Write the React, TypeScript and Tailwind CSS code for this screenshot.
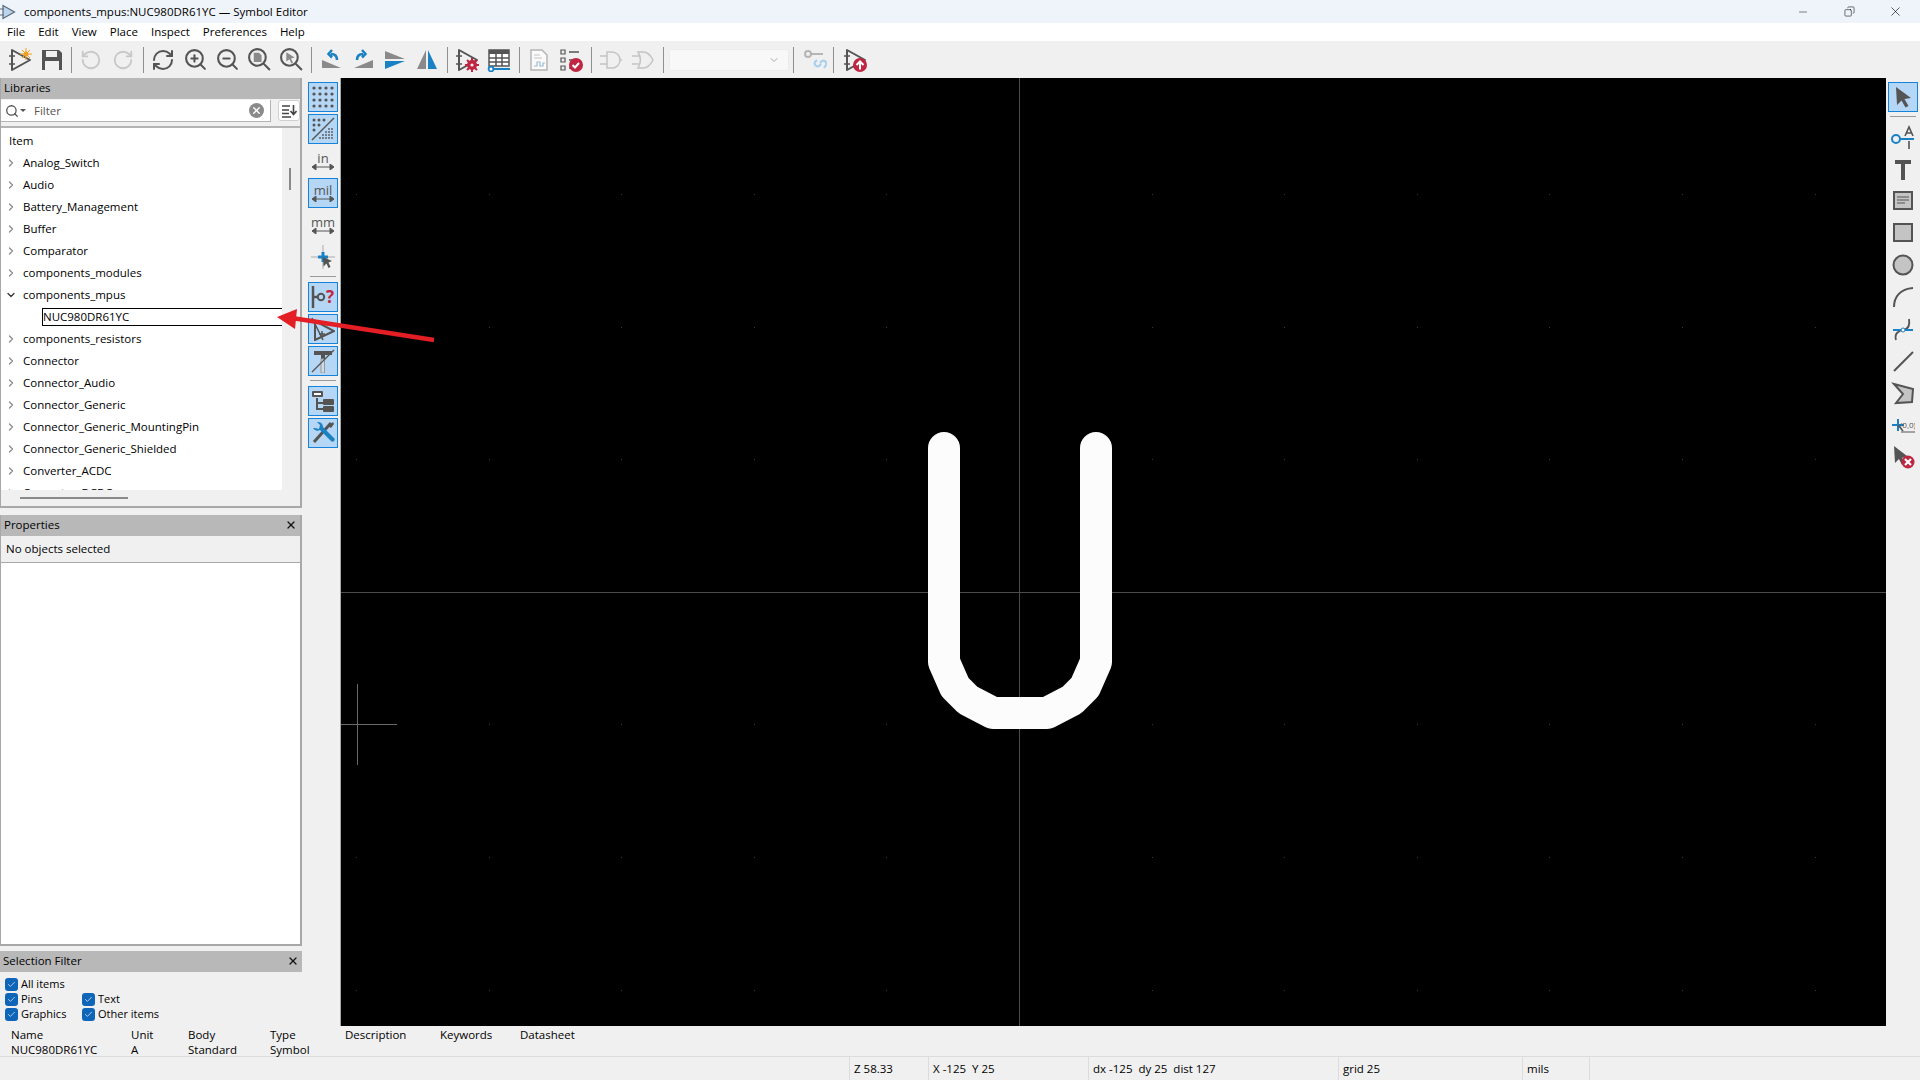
import React from 'react';
import { RefreshCw, RotateCcw, RotateCw, ZoomIn, ZoomOut, Search, ChevronRight, ChevronDown, X, Check, Minus, Copy } from 'lucide-react';

const GRAY = '#545454';
const BLUE = '#1a81c4';
const RED = '#bf2641';

const libs = ['Analog_Switch', 'Audio', 'Battery_Management', 'Buffer', 'Comparator', 'components_modules'];
const libs2 = ['components_resistors', 'Connector', 'Connector_Audio', 'Connector_Generic', 'Connector_Generic_MountingPin', 'Connector_Generic_Shielded', 'Converter_ACDC', 'Converter_DCDC'];

function Svg({ children, size = 24 }: { children: React.ReactNode; size?: number }) {
  return (
    <svg width={size} height={size} viewBox="0 0 24 24" fill="none">
      {children}
    </svg>
  );
}

function Opamp({ color = GRAY }: { color?: string }) {
  return (
    <>
      <path d="M4 2 L22 12 L4 22 Z" stroke={color} strokeWidth="2" fill="none" strokeLinejoin="round" />
      <path d="M1 8h6M1 16h6M2.5 16M4 14v4" stroke={color} strokeWidth="1.5" />
    </>
  );
}

function ToolBtn({ children }: { children?: React.ReactNode }) {
  return <div className="w-8 h-[30px] flex items-center justify-center shrink-0">{children}</div>;
}

function ToolSep({ className = 'ml-1 mr-[3px]' }: { className?: string }) {
  return <div className={`w-px h-[26px] shrink-0 bg-[#8f8f8f] ${className}`} />;
}

function SideBtn({ on, children }: { on?: boolean; children?: React.ReactNode }) {
  return (
    <div className={`w-[30px] h-[30px] shrink-0 flex items-center justify-center ${on ? 'bg-[#b5d7f5] border-[1.5px] border-[#1583dc]' : ''}`}>
      {children}
    </div>
  );
}

function SideSep() {
  return <div className="w-[26px] h-px bg-[#9a9a9a] mt-[2px] mb-[3px] shrink-0" />;
}

function PanelHead({ title, close }: { title: string; close?: boolean }) {
  return (
    <div className="h-[21px] shrink-0 bg-[#b8b8b8] flex items-center justify-between pl-[3px] pr-[3px] pb-[2px]">
      <span>{title}</span>
      {close && <X size={12} strokeWidth={2.5} color="#111" />}
    </div>
  );
}

function Check2({ label, w }: { label: string; w?: string }) {
  return (
    <div className={`flex items-center gap-[3px] h-[15px] text-[11px] ${w ?? ''}`}>
      <span className="w-[13px] h-[13px] rounded-[3px] bg-[#0f65b7] flex items-center justify-center shrink-0">
        <Check size={9} color="#dfeeff" strokeWidth={2} />
      </span>
      <span>{label}</span>
    </div>
  );
}

function TreeRow({ label, open }: { label: string; open?: boolean }) {
  return (
    <div className="h-[22px] shrink-0 flex items-center pl-[4px]">
      {open ? <ChevronDown size={12} color="#333" strokeWidth={2.5} /> : <ChevronRight size={12} color="#8a8a8a" strokeWidth={2.5} />}
      <span className="ml-[6px] whitespace-nowrap">{label}</span>
    </div>
  );
}

function MsgCol({ a, b, w }: { a: string; b?: string; w: string }) {
  return (
    <div className={`${w} shrink-0 flex flex-col leading-[15px]`}>
      <span>{a}</span>
      <span>{b ?? '\u00a0'}</span>
    </div>
  );
}

function Unit({ label }: { label: string }) {
  return (
    <div className="flex flex-col items-center leading-[11px] text-[13px] text-[#555]">
      <span>{label}</span>
      <svg width="22" height="6" viewBox="0 0 22 6"><path d="M0 3l4-3v6ZM22 3l-4-3v6ZM3 3h16" fill={GRAY} stroke={GRAY} /></svg>
    </div>
  );
}

const dots: [number, number][] = [];
for (let i = 0; i < 12; i++) {
  for (let j = 0; j < 7; j++) dots.push([356 + i * 132.6, 194 + j * 132.6]);
}

export default function App() {
  return (
    <div className="relative w-[1920px] h-[1080px] overflow-hidden flex flex-col bg-[#f0f0f0] text-black text-[11.5px] font-['Open_Sans',sans-serif]">
      {/* title bar */}
      <div className="h-[23px] shrink-0 bg-[#eff4fb] flex items-center">
        <div className="w-6 flex justify-center pr-2 shrink-0">
          <svg width="16" height="16" viewBox="0 0 16 16" fill="none">
            <path d="M3 1.5 L14.5 8 L3 14.5 Z" fill="#b9d6ee" stroke="#5d6a76" strokeWidth="1.2" />
            <path d="M0 5h4M0 11h4" stroke="#5d6a76" />
          </svg>
        </div>
        <span>components_mpus:NUC980DR61YC — Symbol Editor</span>
        <div className="ml-auto flex items-center pr-[2px]">
          <div className="w-[46px] flex justify-center"><Minus size={12} strokeWidth={1} /></div>
          <div className="w-[46px] flex justify-center"><Copy size={11} strokeWidth={1.2} className="-scale-x-100" /></div>
          <div className="w-[46px] flex justify-center"><X size={15} strokeWidth={1} /></div>
        </div>
      </div>

      {/* menu */}
      <div className="h-[18px] shrink-0 bg-white flex items-center pl-[7px] gap-[13px]">
        {['File', 'Edit', 'View', 'Place', 'Inspect', 'Preferences', 'Help'].map((m) => (
          <span key={m}>{m}</span>
        ))}
      </div>

      {/* main toolbar */}
      <div className="h-[37px] shrink-0 flex items-center pl-1">
        <ToolBtn>
          <Svg>
            <Opamp />
            <circle cx="18" cy="6" r="2.5" fill="#f0a020" />
            <path d="M18 0v12M12 6h12M14 2l8 8M22 2l-8 8" stroke="#f0a020" strokeWidth="1" />
          </Svg>
        </ToolBtn>
        <ToolBtn>
          <Svg>
            <path d="M2 2h17l3 3v17H2Z" fill={GRAY} />
            <rect x="6" y="3" width="11" height="6" fill="#f0f0f0" />
            <rect x="5" y="13" width="14" height="9" fill="#f0f0f0" />
          </Svg>
        </ToolBtn>
        <ToolSep className="ml-[3px] mr-[3px]" />
        <ToolBtn><RotateCcw size={22} color="#c8c8c8" strokeWidth={2} /></ToolBtn>
        <ToolBtn><RotateCw size={22} color="#c8c8c8" strokeWidth={2} /></ToolBtn>
        <ToolSep />
        <ToolBtn><RefreshCw size={24} color={GRAY} strokeWidth={2} /></ToolBtn>
        <ToolBtn><ZoomIn size={25} color={GRAY} strokeWidth={2} /></ToolBtn>
        <ToolBtn><ZoomOut size={25} color={GRAY} strokeWidth={2} /></ToolBtn>
        <ToolBtn>
          <Svg size={25}>
            <circle cx="10" cy="10" r="8" stroke={GRAY} strokeWidth="2" />
            <path d="M16 16l6 6" stroke={GRAY} strokeWidth="2" />
            <path d="M6.5 5.5h5l2.5 2.5v6.5h-7.5Z" fill="#8a8a8a" />
          </Svg>
        </ToolBtn>
        <ToolBtn>
          <Svg size={25}>
            <circle cx="10" cy="10" r="8" stroke={GRAY} strokeWidth="2" />
            <path d="M16 16l6 6" stroke={GRAY} strokeWidth="2" />
            <path d="M7 5l8 5-3.5 1 2 4-1.5.8-2-4-3 2.2Z" fill="#8a8a8a" />
          </Svg>
        </ToolBtn>
        <ToolSep />
        <ToolBtn>
          <Svg>
            <path d="M3 20 L22 20 L3 12 Z" fill="#8a8a8a" />
            <path d="M14 13c0-4-2-6-6-6M9 3L5.5 7 9 10.5" stroke={BLUE} strokeWidth="2.5" transform="translate(4 -1)" />
          </Svg>
        </ToolBtn>
        <ToolBtn>
          <Svg>
            <path d="M22 20 L3 20 L22 12 Z" fill="#8a8a8a" />
            <path d="M10 13c0-4 2-6 6-6M15 3l3.5 4-3.5 3.5" stroke={BLUE} strokeWidth="2.5" transform="translate(-4 -1)" />
          </Svg>
        </ToolBtn>
        <ToolBtn>
          <Svg>
            <path d="M2 3 L22 11 H2 Z" fill="#8a8a8a" />
            <path d="M2 13 H22 L2 21 Z" fill={BLUE} />
          </Svg>
        </ToolBtn>
        <ToolBtn>
          <Svg>
            <path d="M11 2 V21 H2 Z" fill="#8a8a8a" />
            <path d="M13 2 V21 H22 Z" fill={BLUE} />
          </Svg>
        </ToolBtn>
        <ToolSep />
        <ToolBtn>
          <Svg>
            <Opamp />
            <circle cx="17" cy="17" r="5" fill={RED} />
            <path d="M17 10v14M10 17h14M12 12l10 10M22 12l-10 10" stroke={RED} strokeWidth="2" />
            <circle cx="17" cy="17" r="1.6" fill="#f0f0f0" />
          </Svg>
        </ToolBtn>
        <ToolBtn>
          <Svg>
            <path d="M2 2h20v16H2Z" fill="#fff" stroke={GRAY} strokeWidth="1.5" />
            <path d="M2 2h20v4H2Z" fill={GRAY} />
            <path d="M2 10h20M2 14h20M9 6v12M15 6v12" stroke={GRAY} strokeWidth="1.5" />
            <path d="M6 21h17" stroke={BLUE} strokeWidth="2" />
            <circle cx="4" cy="21" r="2.4" fill="#fff" stroke={BLUE} strokeWidth="1.8" />
          </Svg>
        </ToolBtn>
        <ToolSep />
        <ToolBtn>
          <Svg>
            <path d="M4 2h11l5 5v15H4Z" fill="#fafafa" stroke="#b5b5b5" strokeWidth="1.5" />
            <path d="M7 7h6M7 10h8" stroke="#c4c4c4" />
            <path d="M7 18h3v-4h3v4h3v-3h2" stroke="#9dbcd4" strokeWidth="1.2" />
          </Svg>
        </ToolBtn>
        <ToolBtn>
          <Svg>
            <path d="M2 2h4v4H2ZM2 10h4v4H2ZM2 18h4v4H2Z" stroke={GRAY} strokeWidth="1.2" />
            <path d="M10 4h10M10 12h4M10 20h2" stroke={GRAY} strokeWidth="1.5" />
            <circle cx="17" cy="17" r="7" fill={RED} />
            <path d="M13.5 17l2.5 2.5 4-4.5" stroke="#fff" strokeWidth="2" />
          </Svg>
        </ToolBtn>
        <ToolSep />
        <ToolBtn>
          <Svg>
            <path d="M8 4h5a8 8 0 0 1 0 16H8Z" stroke="#c4c4c4" strokeWidth="1.5" />
            <path d="M1 8h7M1 16h7M21 12h2" stroke="#c4c4c4" strokeWidth="1.5" />
          </Svg>
        </ToolBtn>
        <ToolBtn>
          <Svg>
            <path d="M7 4h5c5 0 8 4 10 8-2 4-5 8-10 8H7c3-5 3-11 0-16Z" stroke="#c4c4c4" strokeWidth="1.5" />
            <path d="M1 8h7M1 16h7" stroke="#c4c4c4" strokeWidth="1.5" />
          </Svg>
        </ToolBtn>
        <ToolSep className="ml-1 mr-[5px]" />
        <div className="w-[120px] h-[22px] shrink-0 bg-[#f8f8f8] border border-[#ececec] rounded-[2px] flex items-center justify-end pr-2">
          <ChevronDown size={12} color="#a8a8a8" />
        </div>
        <ToolSep className="ml-1 mr-[5px]" />
        <ToolBtn>
          <Svg>
            <circle cx="5" cy="6" r="3" stroke="#b5b5b5" strokeWidth="2" />
            <path d="M8 6h12" stroke="#b5b5b5" strokeWidth="2" />
            <path d="M14 12l-2 2a3 3 0 0 0 4 4l2-2M17 15l2-2a3 3 0 0 1 4 4l-2 3" stroke="#a9d0ee" strokeWidth="2.2" />
          </Svg>
        </ToolBtn>
        <ToolSep className="ml-[2px] mr-[5px]" />
        <ToolBtn>
          <Svg>
            <Opamp />
            <circle cx="17" cy="17" r="7" fill={RED} />
            <path d="M17 21.5v-8M13.5 17l3.5-3.5 3.5 3.5" stroke="#fff" strokeWidth="2" />
          </Svg>
        </ToolBtn>
      </div>

      {/* main area */}
      <div className="h-[948px] shrink-0 flex">
        {/* left docks */}
        <div className="w-[302px] shrink-0 flex flex-col">
          <div className="h-[430px] shrink-0 flex flex-col border-r-2 border-b-2 border-l border-[#a8a8a8]">
            <PanelHead title="Libraries" />
            <div className="h-[27px] shrink-0 flex items-start pt-px">
              <div className="w-[270px] h-[22px] bg-white border-b border-r border-[#b4b4b4] flex items-center pl-1">
                <Search size={14} color="#555" strokeWidth={2.2} />
                <span className="w-0 h-0 border-x-[3px] border-t-[3px] border-x-transparent border-t-[#555] mx-[1px]" />
                <span className="ml-[7px] text-[#555]">Filter</span>
                <span className="ml-auto mr-[6px] w-[15px] h-[15px] rounded-full bg-[#8a8a8a] flex items-center justify-center">
                  <X size={11} color="#fff" strokeWidth={3} />
                </span>
              </div>
              <div className="ml-[7px] w-[22px] h-[21px] bg-white border border-[#d0d0d0] rounded-[3px] flex items-center justify-center">
                <svg width="16" height="14" viewBox="0 0 16 14" fill="none">
                  <path d="M1 2h8M1 6h7M1 9.5h7M1 13h9" stroke="#444" strokeWidth="1.6" />
                  <path d="M12.5 1v9M9.5 7l3 3.5 3-3.5" stroke="#444" strokeWidth="1.6" />
                </svg>
              </div>
            </div>
            <div className="flex-1 min-h-0 flex flex-col border-t-2 border-[#b4b4b4] overflow-hidden">
              <div className="flex-1 min-h-0 flex">
                <div className="w-[281px] shrink-0 bg-white flex flex-col overflow-hidden pt-[2px]">
                  <div className="h-[22px] shrink-0 flex items-center pl-[8px]">Item</div>
                  {libs.map((l) => <TreeRow key={l} label={l} />)}
                  <TreeRow label="components_mpus" open />
                  <div className="h-[22px] shrink-0 pl-[41px] flex items-center">
                    <div className="flex-1 h-[18px] border border-r-0 border-black flex items-center">NUC980DR61YC</div>
                  </div>
                  {libs2.map((l) => <TreeRow key={l} label={l} />)}
                </div>
                <div className="flex-1 relative">
                  <div className="absolute left-[7px] top-[40px] w-[2px] h-[22px] bg-[#8a8a8a]" />
                </div>
              </div>
              <div className="h-[16px] shrink-0 flex items-center pl-[19px]">
                <div className="w-[108px] h-[2px] bg-[#8a8a8a]" />
              </div>
            </div>
          </div>

          <div className="h-[431px] shrink-0 mt-[7px] flex flex-col border-r-2 border-b-2 border-l border-[#a8a8a8]">
            <PanelHead title="Properties" close />
            <div className="h-[27px] shrink-0 flex items-center pl-[5px] border-b border-[#a8a8a8]">No objects selected</div>
            <div className="flex-1 bg-white" />
          </div>

          <div className="flex-1 mt-[5px] flex flex-col">
            <PanelHead title="Selection Filter" close />
            <div className="pl-[5px] pt-[5px] flex flex-col">
              <Check2 label="All items" />
              <div className="flex"><Check2 label="Pins" w="w-[77px]" /><Check2 label="Text" /></div>
              <div className="flex"><Check2 label="Graphics" w="w-[77px]" /><Check2 label="Other items" /></div>
            </div>
          </div>
        </div>

        {/* left vertical toolbar */}
        <div className="w-[39px] shrink-0 flex flex-col items-center gap-[2px] pt-1 pl-1 border-r border-[#a8a8a8]">
          <SideBtn on>
            <Svg>
              {[3, 9, 15, 21].map((y) => [3, 9, 15, 21].map((x) => <circle key={`${x}-${y}`} cx={x} cy={y} r="1.6" fill={GRAY} />))}
            </Svg>
          </SideBtn>
          <SideBtn on>
            <Svg>
              {[3, 8, 13].map((y) => [3, 8, 13].map((x) => (x + y < 20 ? <circle key={`${x}-${y}`} cx={x} cy={y} r="1.5" fill={GRAY} /> : null)))}
              <path d="M1 23L23 1" stroke={GRAY} strokeWidth="1.5" />
              {[12, 15, 18, 21].map((y) => [9, 12, 15, 18, 21].map((x) => (x + y > 27 ? <circle key={`${x}+${y}`} cx={x} cy={y} r="0.9" fill={GRAY} /> : null)))}
            </Svg>
          </SideBtn>
          <SideBtn><Unit label="in" /></SideBtn>
          <SideBtn on><Unit label="mil" /></SideBtn>
          <SideBtn><Unit label="mm" /></SideBtn>
          <SideBtn>
            <Svg>
              <path d="M12 0v24M0 12h24" stroke="#aaa" strokeWidth="1" />
              <path d="M12 7v10M7 12h10" stroke={BLUE} strokeWidth="3" />
              <path d="M12 12l9 4-3.5 1.5 2 4.5-2 1-2-4.5-3 3Z" fill={GRAY} />
            </Svg>
          </SideBtn>
          <SideSep />
          <SideBtn on>
            <Svg>
              <path d="M2 1v22" stroke={GRAY} strokeWidth="2.5" />
              <path d="M2 12h5" stroke={GRAY} strokeWidth="2.5" />
              <circle cx="10" cy="12" r="3.2" stroke={GRAY} strokeWidth="2" />
              <text x="15" y="18" fontSize="17" fontWeight="700" fill={RED} fontFamily="Open Sans">?</text>
            </Svg>
          </SideBtn>
          <SideBtn on>
            <Svg>
              <path d="M4 4 L23 14 L4 23 Z" stroke={GRAY} strokeWidth="2" />
              <path d="M1 1 L12 23" stroke={GRAY} strokeWidth="1.5" />
              <path d="M8 17h6M11 14v6" stroke={GRAY} strokeWidth="1.5" />
            </Svg>
          </SideBtn>
          <SideBtn on>
            <Svg>
              <path d="M3 2h18v4h-7v18h-4V6H3Z" fill={GRAY} />
              <path d="M10 10h3.5v14H10Z" fill="#cfdbe6" stroke="#999" />
              <path d="M1 23L23 1" stroke={GRAY} strokeWidth="1.2" />
            </Svg>
          </SideBtn>
          <SideSep />
          <SideBtn on>
            <Svg>
              <path d="M6 9v11h6M6 14h6" stroke={GRAY} strokeWidth="2" />
              <rect x="1" y="2" width="11" height="6" rx="1" fill={GRAY} />
              <rect x="3" y="4" width="7" height="2" fill="#fff" />
              <rect x="12" y="10" width="11" height="6" rx="1" fill={GRAY} />
              <rect x="12" y="17" width="11" height="6" rx="1" fill={GRAY} />
            </Svg>
          </SideBtn>
          <SideBtn on>
            <Svg>
              <path d="M20 2L3 21" stroke={GRAY} strokeWidth="3" />
              <path d="M22 1l1 2-3 4-3-2Z" fill={GRAY} />
              <path d="M2 7a5 5 0 0 0 7 2l11 11a2 2 0 0 0 3-3L12 6A5 5 0 0 0 6 1l3 3-1 4-4-1Z" fill={BLUE} />
            </Svg>
          </SideBtn>
        </div>

        {/* canvas */}
        <div className="flex-1 bg-black min-w-0">
          <svg className="block" width="1545" height="948" viewBox="341 78 1545 948">
            {dots.map(([x, y]) => (
              <rect key={`${x}-${y}`} x={Math.round(x)} y={Math.round(y)} width="1" height="1" fill="#383838" />
            ))}
            <path d="M1019.5 78V1026M341 592.5H1886" stroke="#4c4c4c" strokeWidth="1" />
            <path d="M357.5 684V765M341 724.5H397" stroke="#6a6a6a" strokeWidth="1" />
            <path
              d="M944 448V662L955 687L968 700L993 713H1047L1072 700L1085 687L1096 662V448"
              stroke="#fcfcfc"
              strokeWidth="32"
              strokeLinecap="round"
              strokeLinejoin="round"
              fill="none"
            />
          </svg>
        </div>

        {/* right vertical toolbar */}
        <div className="w-[34px] shrink-0 flex flex-col items-center gap-[2px] pt-1">
          <SideBtn on>
            <Svg>
              <path d="M5 2l15 11-6.5 1 4 7-3 1.5-4-7L6 20Z" fill={GRAY} />
            </Svg>
          </SideBtn>
          <SideSep />
          <SideBtn>
            <Svg>
              <circle cx="5" cy="14" r="4" stroke={BLUE} strokeWidth="2" />
              <path d="M9 14h14" stroke={BLUE} strokeWidth="2" />
              <path d="M14 11l4-9 4 9M15.5 8h5M18 16v8" stroke={GRAY} strokeWidth="1.6" />
            </Svg>
          </SideBtn>
          <SideBtn>
            <Svg>
              <path d="M4 3h16v4h-6v16h-4V7H4Z" fill={GRAY} />
            </Svg>
          </SideBtn>
          <SideBtn>
            <Svg>
              <rect x="3" y="3" width="18" height="17" fill="#c4c4c4" stroke={GRAY} strokeWidth="2" />
              <path d="M6 8h12M6 11h12M6 14h8" stroke={GRAY} strokeWidth="1" />
            </Svg>
          </SideBtn>
          <SideBtn>
            <Svg>
              <rect x="3" y="3" width="18" height="17" fill="#c4c4c4" stroke={GRAY} strokeWidth="2" />
            </Svg>
          </SideBtn>
          <SideBtn>
            <Svg>
              <circle cx="12" cy="12" r="9.5" fill="#c4c4c4" stroke={GRAY} strokeWidth="2" />
            </Svg>
          </SideBtn>
          <SideBtn>
            <Svg>
              <path d="M3 22C3 12 9 4 22 3" stroke={GRAY} strokeWidth="2" />
            </Svg>
          </SideBtn>
          <SideBtn>
            <Svg>
              <path d="M5 23C3 16 8 14 12 13 18 12 19 8 18 2" stroke={GRAY} strokeWidth="1.8" />
              <path d="M2 13h20" stroke={BLUE} strokeWidth="2" />
              <circle cx="12" cy="13" r="2" fill="#fff" stroke={BLUE} />
            </Svg>
          </SideBtn>
          <SideBtn>
            <Svg>
              <path d="M3 22L22 3" stroke={GRAY} strokeWidth="2" />
            </Svg>
          </SideBtn>
          <SideBtn>
            <Svg>
              <path d="M3 3L22 8 21 21 5 22 12 13Z" fill="#c4c4c4" stroke={GRAY} strokeWidth="2" />
            </Svg>
          </SideBtn>
          <SideBtn>
            <Svg>
              <path d="M7 6v12M1 12h12" stroke={BLUE} strokeWidth="2" />
              <path d="M7 12l5 6" stroke={GRAY} strokeWidth="1.5" />
              <path d="M10 19h14" stroke={GRAY} strokeWidth="1" />
              <text x="9" y="15" fontSize="8" fill={GRAY} fontFamily="Open Sans">(0,0)</text>
            </Svg>
          </SideBtn>
          <SideBtn>
            <Svg>
              <path d="M3 1l13 10-5 2 3 5-3 2-3-6-4 4Z" fill={GRAY} />
              <circle cx="17" cy="17" r="6.5" fill={RED} />
              <path d="M14 14l6 6M20 14l-6 6" stroke="#fff" strokeWidth="2.2" />
            </Svg>
          </SideBtn>
        </div>
      </div>

      {/* message panel */}
      <div className="h-[31px] shrink-0 flex items-start pl-[11px] pt-[1px] border-b border-[#dcdcdc]">
        <MsgCol a="Name" b="NUC980DR61YC" w="w-[120px]" />
        <MsgCol a="Unit" b="A" w="w-[57px]" />
        <MsgCol a="Body" b="Standard" w="w-[82px]" />
        <MsgCol a="Type" b="Symbol" w="w-[75px]" />
        <MsgCol a="Description" w="w-[95px]" />
        <MsgCol a="Keywords" w="w-[80px]" />
        <MsgCol a="Datasheet" w="w-[80px]" />
      </div>

      {/* status bar */}
      <div className="flex-1 flex items-center pl-[849px]">
        {[
          ['Z 58.33', 'w-[79px]'],
          ['X -125  Y 25', 'w-[160px]'],
          ['dx -125  dy 25  dist 127', 'w-[250px]'],
          ['grid 25', 'w-[184px]'],
          ['mils', 'w-[67px]'],
        ].map(([t, w]) => (
          <div key={t} className={`${w} h-full flex items-center pl-[4px] border-l border-[#dcdcdc] whitespace-pre`}>{t}</div>
        ))}
        <div className="h-full border-l border-[#dcdcdc]" />
      </div>

      {/* annotation arrow */}
      <svg className="absolute left-[270px] top-[300px] pointer-events-none" width="170" height="50" viewBox="270 300 170 50">
        <path d="M295 318.5L434 340" stroke="#e31e24" strokeWidth="4.5" />
        <path d="M277 317L297 309L295 329Z" fill="#e31e24" />
      </svg>
    </div>
  );
}
